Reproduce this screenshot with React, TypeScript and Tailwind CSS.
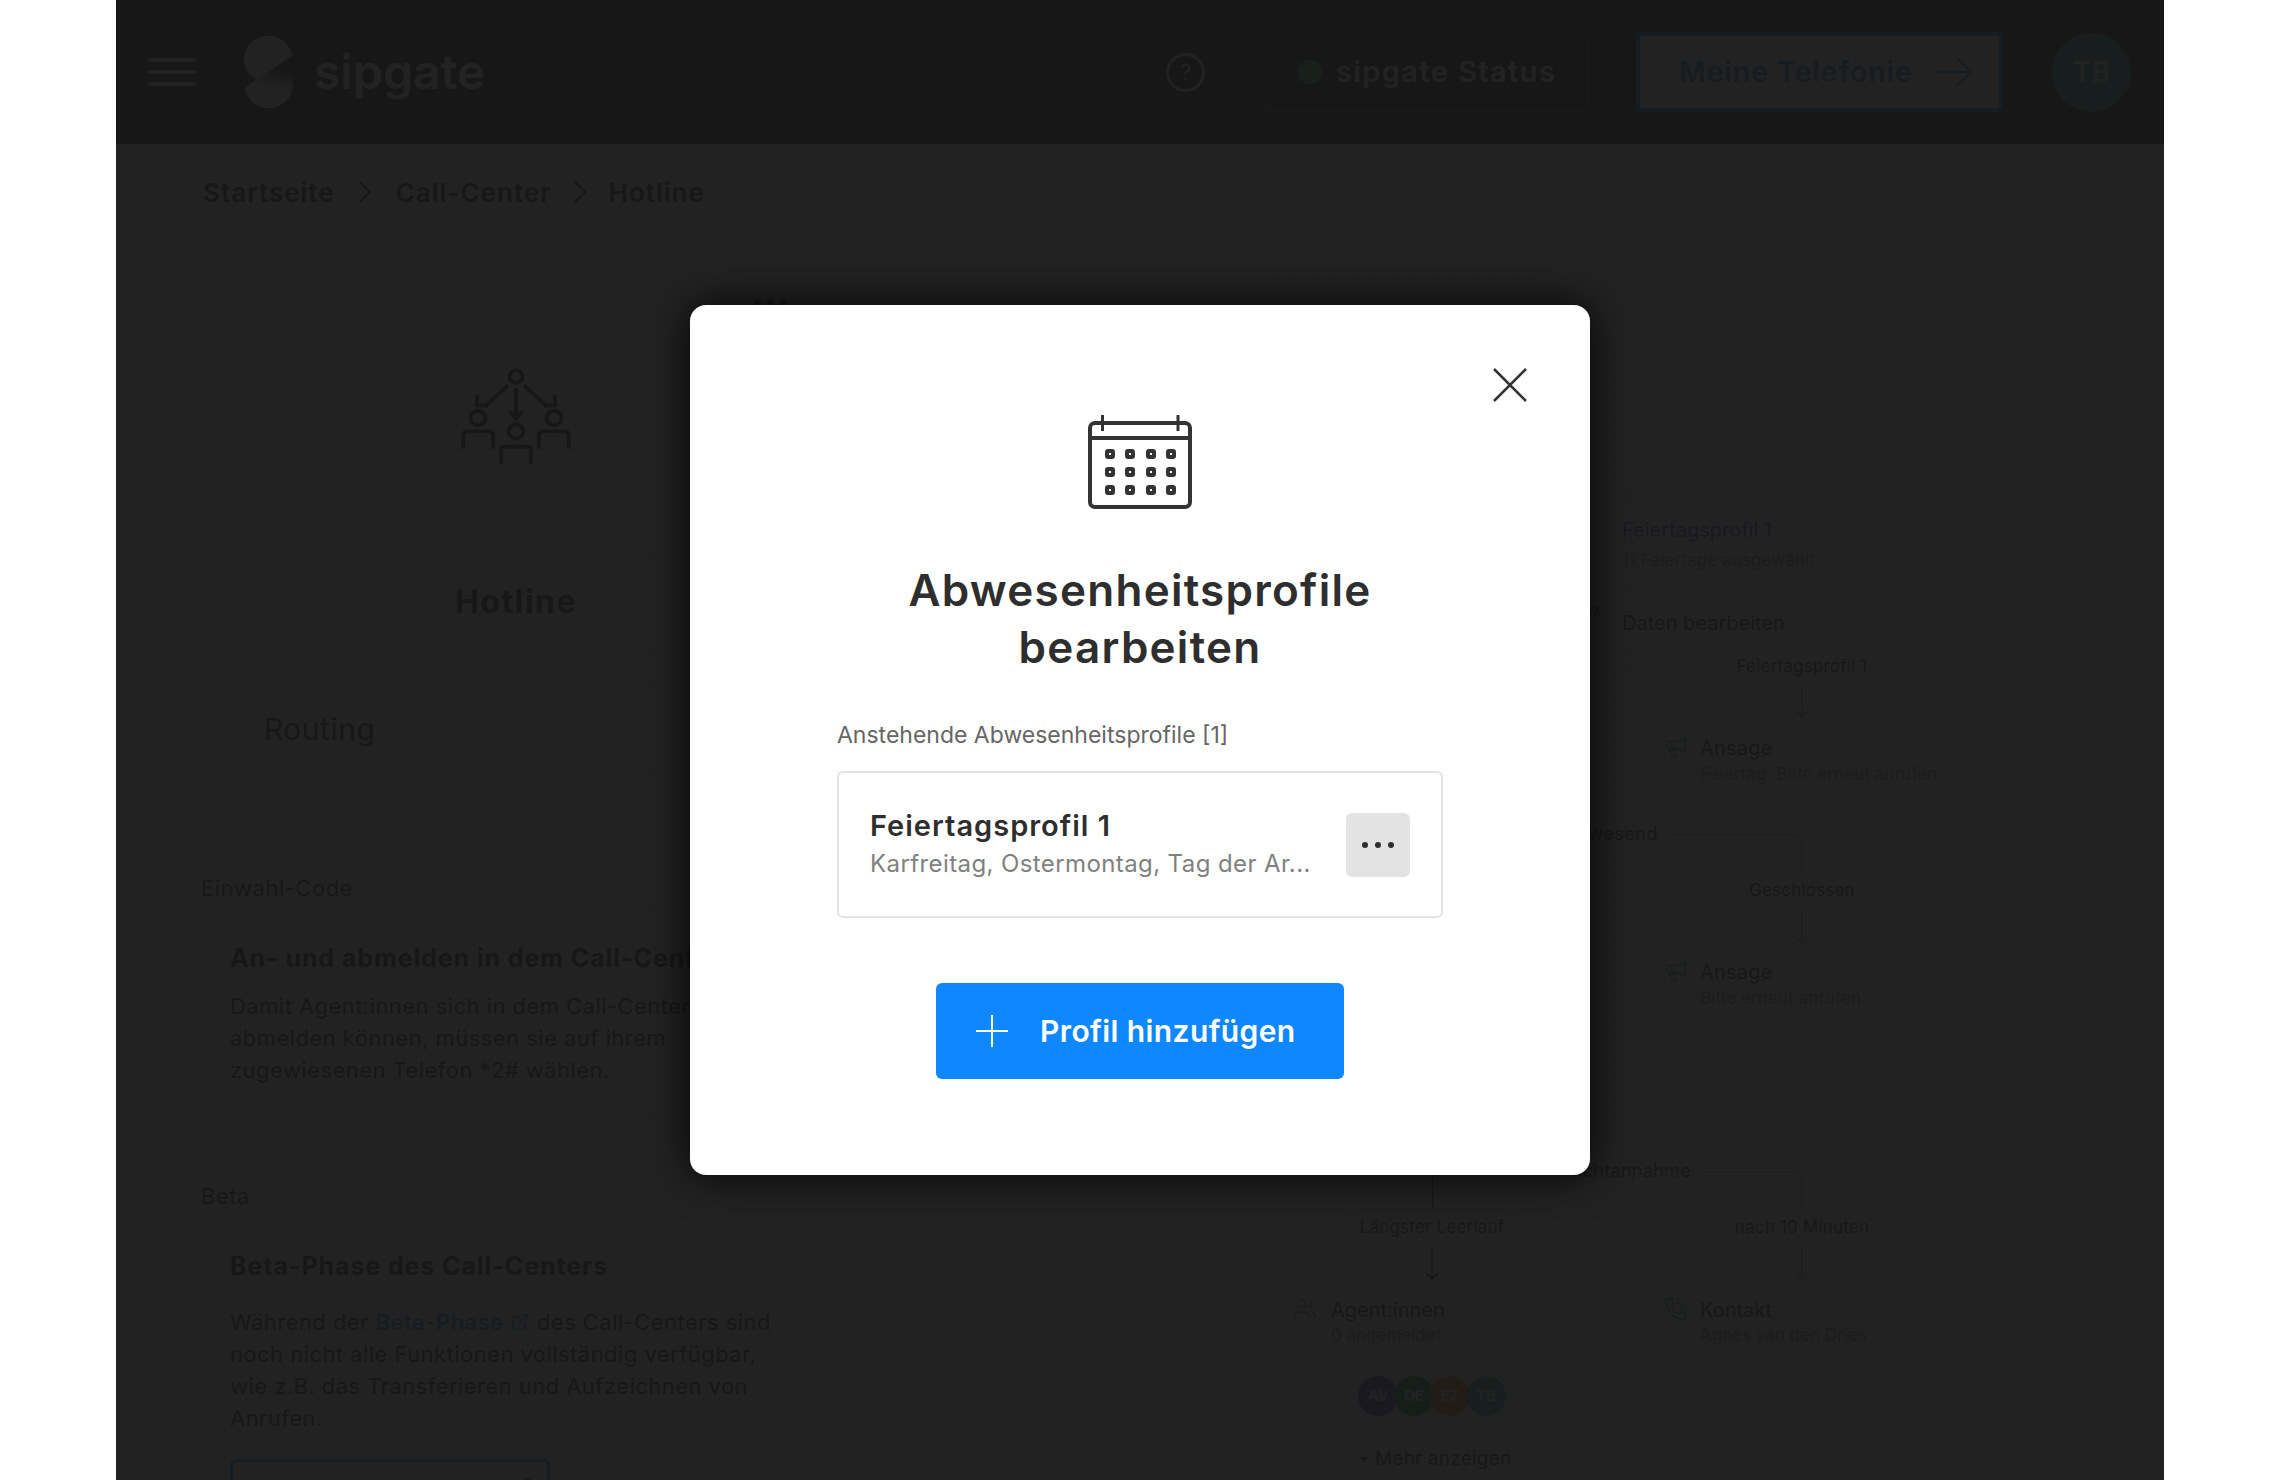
import { ReactNode } from 'react';
import { ExternalLink, Megaphone, PhoneCall, Users } from 'lucide-react';

const font = "font-['Inter','Liberation_Sans',sans-serif]";

function Arrow({ className, dark }: { className: string; dark?: boolean }) {
  return (
    <svg className={`absolute ${className}`} width="14" height="34" viewBox="0 0 14 34" fill="none" stroke={dark ? '#2e2e2e' : '#9a9a9a'} strokeWidth="1.5">
      <path d="M7 0V33M1 27l6 6 6-6" />
    </svg>
  );
}

function Pill({ className, children, w }: { className: string; children: ReactNode; w: string }) {
  return (
    <div className={`absolute -translate-x-1/2 flex h-[36px] items-center justify-center whitespace-nowrap rounded-full border border-[#e3e3e3] bg-white text-[17px] tracking-[0.2px] text-[#2e2e2e] ${w} ${className}`}>
      {children}
    </div>
  );
}

function Node({ className, icon, title, sub }: { className: string; icon: ReactNode; title: string; sub: string }) {
  return (
    <div className={`absolute flex rounded-lg border border-[#e3e3e3] bg-white pl-[15px] pt-[12px] ${className}`}>
      <div className="w-[36px] shrink-0">{icon}</div>
      <div>
        <div className="text-[20px] leading-[26px] tracking-[0.2px] text-[#2e2e2e]">{title}</div>
        <div className="text-[17px] leading-[26px] tracking-[0.1px] whitespace-nowrap text-[#808080]">{sub}</div>
      </div>
    </div>
  );
}

function Avatar({ text, color }: { text: string; color: string }) {
  return (
    <div className={`-mr-[4px] flex size-[40px] items-center justify-center rounded-full text-[15px] font-semibold text-white ${color}`}>
      {text}
    </div>
  );
}

function Logo() {
  return (
    <svg width="49" height="72" viewBox="0 0 49 72">
      <defs>
        <linearGradient id="lg" x1="0.5" y1="0.2" x2="0.4" y2="0.6">
          <stop offset="0" stopColor="#2e2e2e" />
          <stop offset="1" stopColor="#fff" />
        </linearGradient>
      </defs>
      <path d="M1 52L48 19c1 5 1 8 1 13v16c0 13-10 24-24 24C12 72 3 64 1 52Z" fill="url(#lg)" />
      <path d="M48.5 19C45 7 36 0 24 0 10 0 0 11 0 24c0 8 5 16 13 20Z" fill="#fff" />
    </svg>
  );
}

function HotlineIcon() {
  return (
    <svg width="112" height="98" viewBox="0 2 112 102" preserveAspectRatio="none" fill="none" stroke="#2e2e2e" strokeWidth="4">
      <circle cx="56" cy="11" r="6.5" />
      <path d="M48 20L26 41M56 23v30M64 20l22 21" />
      <path d="M17 30v11h11M95 30v11H84M49 47l7 7 7-7" />
      <circle cx="18" cy="54" r="7.5" />
      <circle cx="56" cy="68" r="7.5" />
      <circle cx="94" cy="54" r="7.5" />
      <path d="M3 86V72q0-4 4-4h22q4 0 4 4v14M41 102V88q0-4 4-4h22q4 0 4 4v14M79 86V72q0-4 4-4h22q4 0 4 4v14" />
    </svg>
  );
}

function CalendarIcon() {
  const xs = [22, 42, 63, 83];
  const ys = [39, 57, 75];
  return (
    <svg width="104" height="94" viewBox="0 0 104 94" fill="none" stroke="#333" strokeWidth="4">
      <rect x="2" y="8" width="100" height="84" rx="5" />
      <path d="M2 23h100" />
      <path d="M14.5 0v16M90 0v16" strokeWidth="3" />
      {ys.map(y => xs.map(x => <rect key={`${x}-${y}`} x={x - 3} y={y - 3} width="6" height="6" rx="1" />))}
    </svg>
  );
}

function Page() {
  return (
    <>
      <header className="flex h-[144px] items-center bg-[#2e2e2e] pl-[32px] pr-[33px] text-white">
        <div className="flex w-[48px] flex-col gap-[8px]">
          <span className="h-[4px] rounded-full bg-white" />
          <span className="h-[4px] rounded-full bg-white" />
          <span className="h-[4px] rounded-full bg-white" />
        </div>
        <div className="ml-[48px]"><Logo /></div>
        <div className="ml-[21px] text-[48px] font-semibold leading-none">sipgate</div>
        <div className="ml-auto flex size-[39px] items-center justify-center rounded-full border-[3px] border-white text-[22px]">?</div>
        <div className="ml-[60px] flex h-[79px] w-[324px] items-center gap-[14px] rounded border-2 border-[#4a4a4a] pl-[31px] text-[29px] font-semibold tracking-[1.4px]">
          <span className="size-[24px] rounded-full bg-[#3fd07a]" />
          sipgate Status
        </div>
        <div className="ml-[47px] flex h-[80px] w-[367px] items-center gap-[23px] rounded-md border-4 border-[#0f87ff] bg-white pl-[39px] text-[29px] font-semibold tracking-[0.7px] text-[#0f87ff]">
          Meine Telefonie
          <svg width="36" height="32" viewBox="0 0 36 32" fill="none" stroke="#0f87ff" strokeWidth="2"><path d="M0 16h35M20 1l15 15-15 15" /></svg>
        </div>
        <div className="ml-[49px] flex size-[79px] items-center justify-center rounded-full bg-[#2ba89a] text-[28px] font-semibold">TB</div>
      </header>

      <main className="flex">
        <div className="w-[1146px]">
          <nav className="flex h-[96px] items-center pl-[87px] text-[26px] font-semibold tracking-[1px] text-[#2e2e2e]">
            <span>Startseite</span>
            <svg className="mx-[24px]" width="13" height="22" viewBox="0 0 13 22" fill="none" stroke="#2e2e2e" strokeWidth="2"><path d="M1 1l10 10L1 21" /></svg>
            <span>Call-Center</span>
            <svg className="mx-[22px]" width="13" height="22" viewBox="0 0 13 22" fill="none" stroke="#2e2e2e" strokeWidth="2"><path d="M1 1l10 10L1 21" /></svg>
            <span>Hotline</span>
          </nav>

          <div className="ml-[85px] w-[600px]">
            <div className="ml-[31px] w-[568px]">
              <div className="mt-[128px] flex justify-center"><HotlineIcon /></div>
              <div className="mt-[88px] flex h-[95px] items-center justify-center rounded-t-lg border border-[#e3e3e3] text-[32px] font-bold tracking-[1.5px] text-[#2e2e2e]">Hotline</div>
              <div className="mt-[34px] flex h-[93px] items-center rounded-lg border border-[#e3e3e3] pl-[31px] text-[30px] tracking-[0.5px] text-[#2e2e2e]">Routing</div>
            </div>

            <div className="mt-[97px] text-[22px] leading-[30px] tracking-[0.5px] text-[#2e2e2e]">Einwahl-Code</div>
            <div className="mt-[8px] h-[206px] rounded-lg border border-[#e3e3e3] pl-[28px] pt-[30px] text-[#2e2e2e]">
              <div className="text-[25px] font-bold leading-[32px] tracking-[0.9px]">An- und abmelden in dem Call-Center</div>
              <p className="mt-[16px] text-[22px] leading-[32px] tracking-[0.45px]">
                Damit Agent:innen sich in dem Call-Center an- und<br />abmelden können, müssen sie auf ihrem<br />zugewiesenen Telefon *2# wählen.
              </p>
            </div>

            <div className="mt-[64px] text-[22px] leading-[30px] tracking-[0.5px] text-[#2e2e2e]">Beta</div>
            <div className="mt-[7px] rounded-lg border border-[#e3e3e3] pl-[28px] pt-[31px] text-[#2e2e2e]">
              <div className="text-[25px] font-bold leading-[32px] tracking-[0.9px]">Beta-Phase des Call-Centers</div>
              <p className="mt-[24px] text-[22px] leading-[32px] tracking-[0.45px]">
                Während der <span className="font-semibold text-[#0f87ff]">Beta-Phase</span> <ExternalLink className="inline size-[20px] -translate-y-[2px] text-[#0f87ff]" /> des Call-Centers sind<br />
                noch nicht alle Funktionen vollständig verfügbar,<br />
                wie z.B. das Transferieren und Aufzeichnen von<br />
                Anrufen.
              </p>
              <div className="mt-[25px] flex h-[80px] w-[320px] justify-end rounded-md border-[3px] border-[#0f87ff] pr-[14px] pt-[14px]">
                <ExternalLink className="size-[22px] text-[#0f87ff]" />
              </div>
            </div>
          </div>
        </div>

        <div className="relative h-[1336px] flex-1 text-[#2e2e2e]">
          <div className="absolute left-0 top-0 h-full w-[820px] bg-[radial-gradient(#b8b8b8_1px,transparent_1.5px)] bg-[size:20px_20px] bg-[position:1px_3px]" />

          <div className="absolute left-[258px] top-[346px] h-[180px] w-[430px] rounded-lg border border-[#e3e3e3] bg-white" />
          <div className="absolute left-[278px] top-[358px] h-[150px] w-[387px] rounded-lg border border-[#e3e3e3] bg-white pl-[81px]">
            <div className="mt-[14px] text-[20px] leading-[26px] text-[#3a3af0]">Feiertagsprofil 1</div>
            <div className="mt-[4px] text-[17px] leading-[26px] tracking-[0.1px] text-[#808080]">11 Feiertage ausgewählt</div>
            <div className="-ml-[81px] mt-[18px] border-t border-[#e3e3e3]" />
            <div className="mt-[18px] text-[20px] leading-[26px]">Daten bearbeiten</div>
          </div>
          <div className="absolute right-[562px] top-[454px] text-[18px] leading-[24px]">Mailbox</div>

          <Pill className="left-[540px] top-[505px]" w="w-[160px]">Feiertagsprofil 1</Pill>
          <Arrow className="left-[533px] top-[540px]" />
          <Node className="left-[386px] top-[578px] h-[71px] w-[309px]" icon={<Megaphone className="size-[24px] text-[#00a860]" strokeWidth={1.25} />} title="Ansage" sub="Feiertag: Bitte erneut anrufen" />

          <div className="absolute right-[506px] top-[677px] text-[18px] leading-[26px] tracking-[0.5px]">Abwesend</div>
          <div className="absolute left-[408px] top-[690px] h-[36px] w-[132px] rounded-tr-md border-r border-t border-[#9a9a9a]" />
          <Pill className="left-[540px] top-[729px]" w="w-[143px]">Geschlossen</Pill>
          <Arrow className="left-[533px] top-[766px]" />
          <Node className="left-[386px] top-[802px] h-[71px] w-[309px]" icon={<Megaphone className="size-[24px] text-[#00a860]" strokeWidth={1.25} />} title="Ansage" sub="Bitte erneut anrufen" />

          <div className="absolute right-[473px] top-[1014px] text-[18px] leading-[26px] tracking-[0.3px]">Nichtannahme</div>
          <div className="absolute left-[440px] top-[1027px] h-[37px] w-[100px] rounded-tr-md border-r border-t border-[#9a9a9a]" />
          <div className="absolute left-[170px] top-[1027px] h-[37px] w-[1px] bg-[#2e2e2e]" />

          <Pill className="left-[170px] top-[1066px]" w="w-[183px]">Längster Leerlauf</Pill>
          <Pill className="left-[540px] top-[1066px]" w="w-[172px]">nach 10 Minuten</Pill>
          <Arrow className="left-[163px] top-[1102px]" dark />
          <Arrow className="left-[533px] top-[1102px]" />

          <div className="absolute left-[17px] top-[1138px] h-[220px] w-[307px] rounded-lg border border-[#e3e3e3] bg-white pl-[13px] pt-[14px]">
            <div className="flex">
              <div className="w-[38px]"><Users className="size-[24px] text-[#0f87ff]" strokeWidth={1.25} /></div>
              <div>
                <div className="text-[20px] leading-[26px]">Agent:innen</div>
                <div className="text-[17px] leading-[24px] text-[#808080]">0 angemeldet</div>
              </div>
            </div>
            <div className="ml-[65px] mt-[29px] flex">
              <Avatar text="AV" color="bg-[#6a5af9]" />
              <Avatar text="DE" color="bg-[#20b060]" />
              <Avatar text="EZ" color="bg-[#f08030]" />
              <Avatar text="TB" color="bg-[#2ba89a]" />
            </div>
            <div className="ml-[67px] mt-[30px] flex items-center gap-[7px] text-[19px] leading-[26px] tracking-[0.2px]">
              <span className="h-0 w-0 border-x-[4px] border-t-[5px] border-x-transparent border-t-[#2e2e2e]" />
              Mehr anzeigen
            </div>
          </div>

          <div className="absolute left-[385px] top-[1138px] flex h-[73px] w-[303px] rounded-lg border border-[#e3e3e3] bg-white pl-[16px] pt-[14px]">
            <div className="w-[36px]"><PhoneCall className="size-[24px] text-[#00a860]" strokeWidth={1.25} /></div>
            <div>
              <div className="text-[20px] leading-[26px]">Kontakt</div>
              <div className="text-[17px] leading-[24px] text-[#808080]">Agnes van den Dries</div>
            </div>
          </div>
        </div>
      </main>

      <div className="absolute left-[638px] top-[299px] flex gap-[7px]">
        <span className="size-[6px] rounded-full bg-[#2e2e2e]" />
        <span className="size-[6px] rounded-full bg-[#2e2e2e]" />
        <span className="size-[6px] rounded-full bg-[#2e2e2e]" />
      </div>
    </>
  );
}

export default function App() {
  return (
    <div className={`flex h-[1480px] justify-center overflow-hidden bg-white ${font}`}>
      <div className="relative h-[1480px] w-[2048px] shrink-0 overflow-hidden bg-white">
        <Page />
        <div className="absolute inset-0 bg-[#161616]/95" />

        <div className="absolute left-[574px] top-[305px] flex h-[870px] w-[900px] flex-col items-center rounded-[16px] bg-white pt-[110px] text-[#2e2e2e] shadow-[0_0_40px_rgba(0,0,0,0.9)]">
          <button className="absolute left-[803px] top-[63px]">
            <svg width="34" height="34" viewBox="0 0 34 34" fill="none" stroke="#333" strokeWidth="2.5"><path d="M1 1l32 32M33 1L1 33" /></svg>
          </button>
          <CalendarIcon />
          <h2 className="mt-[53px] text-center text-[44px] font-semibold leading-[57px] tracking-[1.25px]">
            Abwesenheitsprofile<br />bearbeiten
          </h2>
          <div className="mt-[43px] w-[606px] text-[23px] leading-[32px] text-[#666]">Anstehende Abwesenheitsprofile [1]</div>
          <div className="mt-[20px] flex h-[147px] w-[606px] items-center justify-between rounded-md border-2 border-[#e3e3e3] pl-[31px] pr-[31px]">
            <div className="w-[450px]">
              <div className="text-[29px] font-semibold leading-[34px] tracking-[1px]">Feiertagsprofil 1</div>
              <div className="mt-[4px] whitespace-nowrap text-[24px] leading-[34px] tracking-[0.4px] text-[#808080]">Karfreitag, Ostermontag, Tag der Ar...</div>
            </div>
            <button className="flex size-[64px] items-center justify-center gap-[7px] rounded-md bg-[#e3e3e3]">
              <span className="size-[6px] rounded-full bg-[#2e2e2e]" />
              <span className="size-[6px] rounded-full bg-[#2e2e2e]" />
              <span className="size-[6px] rounded-full bg-[#2e2e2e]" />
            </button>
          </div>
          <button className="mt-[65px] flex h-[96px] w-[408px] items-center rounded-md bg-[#0f87ff] pl-[40px] text-[30px] font-semibold tracking-[0.4px] text-white">
            <svg width="32" height="32" viewBox="0 0 32 32" fill="none" stroke="#fff" strokeWidth="2"><path d="M16 0v32M0 16h32" /></svg>
            <span className="ml-[32px]">Profil hinzufügen</span>
          </button>
        </div>
      </div>
    </div>
  );
}
